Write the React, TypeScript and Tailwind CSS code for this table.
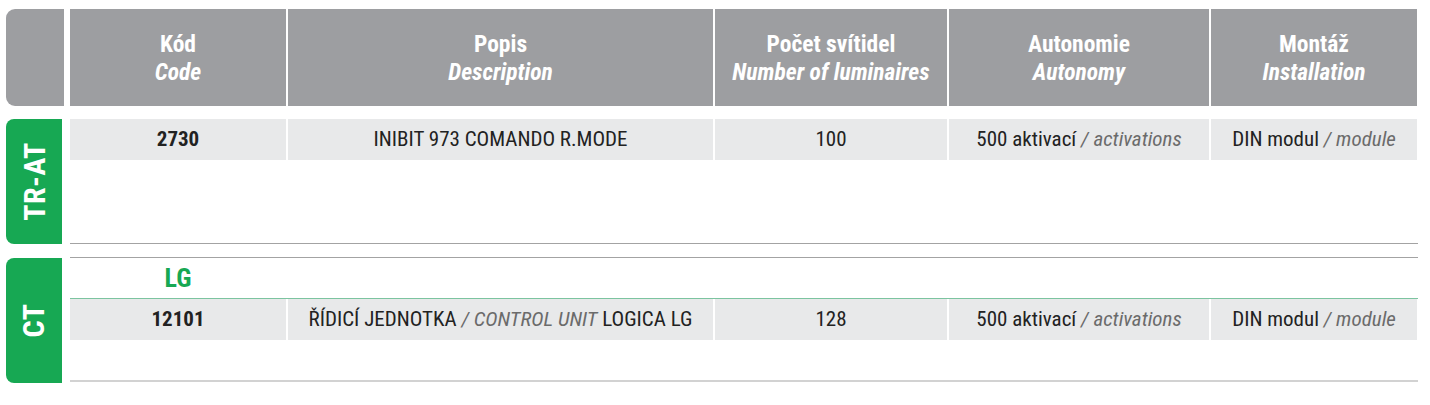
const cols = "grid grid-cols-[216px_425px_232px_260px_206px] gap-x-[2px]";
const font = { fontFamily: '"Roboto Condensed", "Liberation Sans Narrow", Roboto, sans-serif' };

function Header() {
  const heads: [string, string][] = [
    ["Kód", "Code"],
    ["Popis", "Description"],
    ["Počet svítidel", "Number of luminaires"],
    ["Autonomie", "Autonomy"],
    ["Montáž", "Installation"],
  ];
  return (
    <div className="flex gap-[6px]">
      <div className="w-[58px] h-[97px] bg-[#9d9ea1] rounded-l-[9px]" />
      <div className={cols}>
        {heads.map(([cz, en]) => (
          <div key={cz} className="h-[97px] bg-[#9d9ea1] flex flex-col items-center justify-center text-white font-bold text-[23.5px] leading-[28px]">
            <span>{cz}</span>
            <span className="italic">{en}</span>
          </div>
        ))}
      </div>
    </div>
  );
}

function Tab({ label }: { label: string }) {
  return (
    <div className="w-[56px] h-[125px] bg-[#17a853] rounded-l-[8px] flex items-center justify-center">
      <span className="-rotate-90 whitespace-nowrap text-white font-bold text-[30px] tracking-[0.5px]">{label}</span>
    </div>
  );
}

function DataRow({ code, desc, count }: { code: string; desc: React.ReactNode; count: string }) {
  const cell = "h-[41px] bg-[#e8e9ea] flex items-center justify-center text-[21px] text-[#222]";
  return (
    <div className={cols}>
      <div className={cell + " font-bold"}>{code}</div>
      <div className={cell}>{desc}</div>
      <div className={cell}>{count}</div>
      <div className={cell}>
        500 aktivací&nbsp;<span className="text-[#6b6b6b] italic">/ activations</span>
      </div>
      <div className={cell}>
        DIN modul&nbsp;<span className="text-[#6b6b6b] italic">/ module</span>
      </div>
    </div>
  );
}

export default function App() {
  return (
    <div className="bg-white w-[1430px] h-[405px] pt-[9px] pl-[6px]" style={font}>
      <Header />

      <div className="flex gap-[8px] mt-[13px]">
        <Tab label="TR-AT" />
        <div className="w-[1348px] h-[125px] border-b border-[#a3a3a3]">
          <DataRow code="2730" desc="INIBIT 973 COMANDO R.MODE" count="100" />
        </div>
      </div>

      <div className="flex gap-[8px] mt-[14px]">
        <Tab label="CT" />
        <div className="w-[1348px] h-[122px] -mt-[1px] border-t border-[#a3a3a3] border-b-2 border-b-[#d2d2d2] box-content">
          <div className="w-[216px] h-[40px] flex items-center justify-center text-[#17a853] font-bold text-[26px]">LG</div>
          <div className="border-t border-[#7cc4a0]">
            <DataRow
              code="12101"
              desc={
                <>
                  ŘÍDICÍ JEDNOTKA&nbsp;<span className="text-[#6b6b6b] italic">/ CONTROL UNIT</span>&nbsp;LOGICA LG
                </>
              }
              count="128"
            />
          </div>
        </div>
      </div>
    </div>
  );
}
